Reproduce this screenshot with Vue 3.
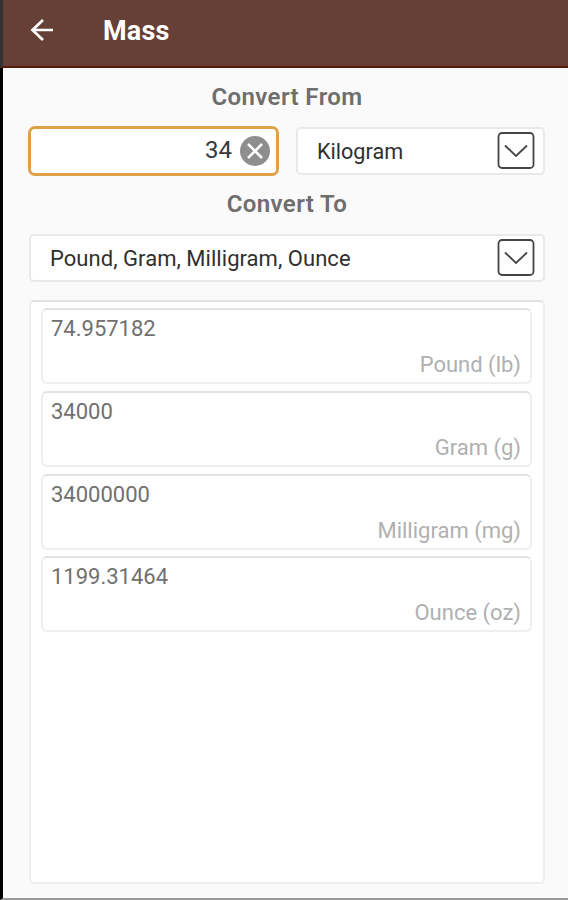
<script setup>
import { ref } from 'vue'

const cantidad = ref('34')

const resultados = [
  { valor: '74.957182', unidad: 'Pound (lb)' },
  { valor: '34000', unidad: 'Gram (g)' },
  { valor: '34000000', unidad: 'Milligram (mg)' },
  { valor: '1199.31464', unidad: 'Ounce (oz)' },
]

function limpiar() {
  cantidad.value = ''
}
</script>

<template>
  <div class="pantalla">
    <header class="barra">
      <button class="boton-volver" aria-label="Back">
        <svg width="24" height="24" viewBox="0 0 24 24">
          <path
            d="M23 11H2M13 1L2.500 11 13 21"
            fill="none"
            stroke="#fff"
            stroke-width="2.700"
          />
        </svg>
      </button>
      <h1 class="titulo">Mass</h1>
    </header>

    <main class="contenido">
      <h2 class="subtitulo">Convert From</h2>
      <div class="fila">
        <div class="campo">
          <span class="cantidad">{{ cantidad }}</span>
          <button class="boton-limpiar" aria-label="Clear" @click="limpiar">
            <svg width="30" height="30" viewBox="0 0 30 30">
              <circle cx="15" cy="15" r="15" fill="#8e8e8e" />
              <path
                d="M8 8l14 14M22 8L8 22"
                stroke="#fff"
                stroke-width="2.600"
              />
            </svg>
          </button>
        </div>
        <div class="selector selector-origen">
          <span class="unidad-origen">Kilogram</span>
          <svg class="flecha" width="38" height="38" viewBox="0 0 38 38">
            <rect x="1.500" y="1" width="35" height="35" rx="3.500" />
            <path d="M8 13.500l11 10.500 11-10.500" />
          </svg>
        </div>
      </div>

      <h2 class="subtitulo">Convert To</h2>
      <div class="selector selector-destino">
        <span class="unidades-destino">Pound, Gram, Milligram, Ounce</span>
        <svg class="flecha" width="38" height="38" viewBox="0 0 38 38">
          <rect x="1.500" y="1" width="35" height="35" rx="3.500" />
          <path d="M8 13.500l11 10.500 11-10.500" />
        </svg>
      </div>

      <section class="panel">
        <div
          v-for="{ valor, unidad } in resultados"
          :key="unidad"
          class="tarjeta"
        >
          <span class="valor">{{ valor }}</span>
          <span class="unidad">{{ unidad }}</span>
        </div>
      </section>
    </main>
  </div>
</template>

<style>
body {
  margin: 0;
  background: #fafafa;
}
</style>

<style scoped>
.pantalla {
  display: flex;
  flex-direction: column;
  box-sizing: border-box;
  height: 900px;
  border-left: 3px solid #000;
  border-bottom: 2px solid #999;
  background: #fafafa;
  font-family: Roboto, 'Liberation Sans', sans-serif;
}

.barra {
  display: flex;
  align-items: center;
  box-sizing: border-box;
  height: 68px;
  margin-left: -3px;
  padding: 0 0 5px 27px;
  border-left: 3px solid #333;
  border-bottom: 2px solid #571a0c;
  background: #664036;
}

button {
  display: flex;
  padding: 0;
  border: none;
  background: none;
}

.titulo {
  margin: 0 0 0 49px;
  color: #fff;
  font-size: 27px;
  font-weight: 700;
  letter-spacing: 0.200px;
  line-height: 32px;
}

.contenido {
  display: flex;
  flex: 1;
  flex-direction: column;
  padding: 0 23px 14px 26px;
}

.subtitulo {
  margin: 0;
  color: #6e6e6e;
  font-size: 24px;
  font-weight: 600;
  letter-spacing: 0.400px;
  line-height: 58px;
  text-align: center;
}

.fila {
  display: flex;
  justify-content: space-between;
  margin-top: 1px;
  height: 48px;
}

.campo {
  display: flex;
  align-items: center;
  justify-content: flex-end;
  box-sizing: border-box;
  width: 251px;
  height: 50px;
  margin: -1px 0 0 -1px;
  padding-right: 6px;
  border: 3px solid #dfa146;
  border-radius: 7px;
  background: #fff;
}

.cantidad {
  margin-right: 8px;
  padding-bottom: 3px;
  color: #383838;
  font-size: 24px;
}

.selector {
  display: flex;
  align-items: center;
  justify-content: space-between;
  box-sizing: border-box;
  height: 48px;
  padding: 0 8px 0 19px;
  border: 2px solid #e9e9e9;
  border-radius: 5px;
  background: #fff;
  color: #303030;
  font-size: 22px;
}

.selector-origen {
  width: 249px;
}

.selector-destino {
  margin-top: 1px;
}

.unidad-origen {
  font-size: 21.600px;
}

.unidades-destino {
  letter-spacing: 0.040px;
}

.flecha {
  fill: none;
  stroke: #444;
  stroke-width: 1.800;
}

.panel {
  display: flex;
  flex: 1;
  flex-direction: column;
  gap: 6.800px;
  margin-top: 18px;
  padding: 6px 11px 0 10px;
  border: 2px solid #eee;
  border-top-color: #e2e2e2;
  border-radius: 5px;
  background: #fff;
}

.tarjeta {
  display: flex;
  flex-direction: column;
  justify-content: space-between;
  box-sizing: border-box;
  height: 76px;
  padding: 6px 9px 4px 8px;
  border: 2px solid #eee;
  border-top-color: #e2e2e2;
  border-radius: 6px;
  font-size: 22px;
  line-height: 26px;
}

.valor {
  color: #707070;
}

.unidad {
  color: #b0b0b0;
  text-align: right;
}
</style>
